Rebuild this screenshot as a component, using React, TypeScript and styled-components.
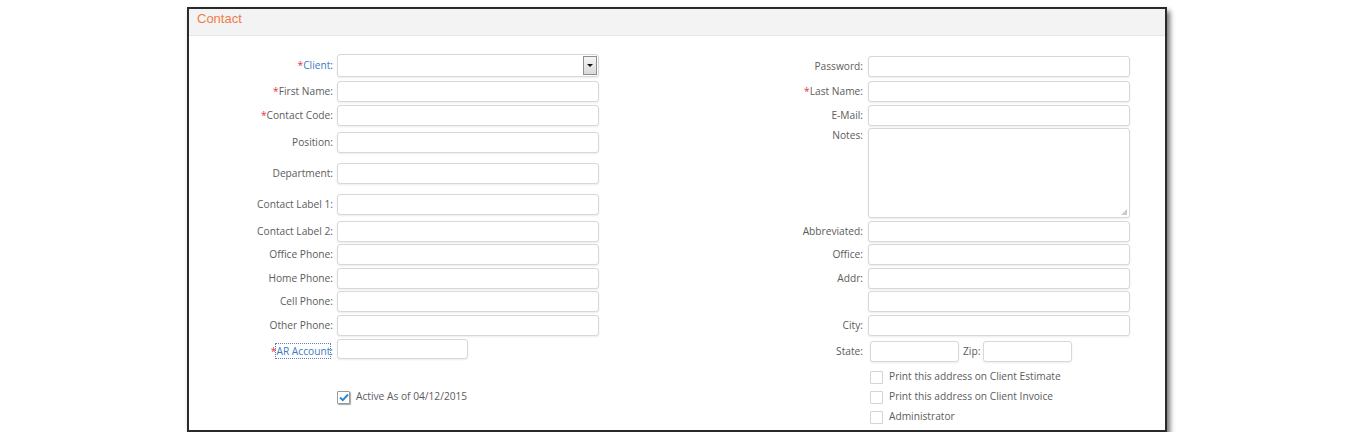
import React from 'react';
import styled, { createGlobalStyle } from 'styled-components';

const GlobalStyle = createGlobalStyle`
  body {
    margin: 0;
    background: #fff;
    font-family: 'Open Sans', 'Liberation Sans', Arial, sans-serif;
  }
`;

const Page = styled.div`
  padding: 7px 0 0 187px;
`;

const Panel = styled.section`
  box-sizing: border-box;
  width: 980px;
  height: 425px;
  border: 2px solid #2a2a2a;
  background: #fff;
  box-shadow: 3px 4px 5px rgba(0, 0, 0, 0.55);
`;

const PanelHeader = styled.header`
  box-sizing: border-box;
  height: 27px;
  padding: 1px 0 0 8px;
  background: #f3f3f3;
  border-bottom: 1px solid #e7e7e7;
  color: #f27b4b;
  font: 13px/17px 'Liberation Sans', Arial, sans-serif;
`;

const Body = styled.div`
  display: flex;
`;

const Column = styled.div<{ $top: number }>`
  display: flex;
  flex-direction: column;
  padding-top: ${p => p.$top}px;
`;

const Row = styled.div<{ $mt: number; $start?: boolean }>`
  display: flex;
  align-items: ${p => (p.$start ? 'flex-start' : 'center')};
  margin-top: ${p => p.$mt}px;
`;

const Label = styled.label<{ $w: number; $gap: number; $padTop?: number }>`
  box-sizing: border-box;
  width: ${p => p.$w}px;
  margin-right: ${p => p.$gap}px;
  padding-top: ${p => p.$padTop || 0}px;
  padding-bottom: ${p => (p.$padTop ? 0 : 1)}px;
  text-align: right;
  font-size: 10.2px;
  line-height: 13px;
  color: #5c5c5c;
  white-space: nowrap;
`;

const Req = styled.span`
  color: #e8343a;
`;

const LinkText = styled.span<{ $dotted?: boolean }>`
  color: #3c7bc2;
  ${p => (p.$dotted ? 'outline: 1px dotted #5b7fb0; outline-offset: 0;' : '')}
`;

const Input = styled.input<{ $w?: number; $h?: number }>`
  box-sizing: border-box;
  width: ${p => p.$w || 262}px;
  height: ${p => p.$h || 21}px;
  margin: 0;
  padding: 0 4px;
  border: 1px solid #d8d8d8;
  border-radius: 3px;
  background: #fff;
  box-shadow: 0 1px 2px rgba(0, 0, 0, 0.08);
  font: 11px 'Open Sans', sans-serif;
  outline: none;
`;

const NotesBox = styled.div`
  box-sizing: border-box;
  position: relative;
  width: 262px;
  height: 90px;
  border: 1px solid #d8d8d8;
  border-radius: 3px;
  box-shadow: 0 1px 2px rgba(0, 0, 0, 0.08);
`;

const TextArea = styled.textarea`
  box-sizing: border-box;
  display: block;
  width: 100%;
  height: 100%;
  margin: 0;
  border: 0;
  background: transparent;
  resize: none;
  outline: none;
`;

const Grip = styled.span`
  position: absolute;
  right: 2px;
  bottom: 2px;
  width: 6px;
  height: 6px;
  background:
    radial-gradient(circle, #c8c8c8 0.7px, transparent 0.9px) 0 0 / 2px 2px;
  clip-path: polygon(100% 0, 100% 100%, 0 100%);
`;

const Select = styled.div`
  box-sizing: border-box;
  position: relative;
  width: 262px;
  height: 23px;
  border: 1px solid #d8d8d8;
  border-radius: 3px;
  background: #fff;
  box-shadow: 0 1px 2px rgba(0, 0, 0, 0.08);
`;

const SelectButton = styled.span`
  box-sizing: border-box;
  position: absolute;
  top: 1px;
  right: 1px;
  width: 14px;
  height: 19px;
  border: 1px solid #8f8f8f;
  background: linear-gradient(#f6f6f6, #d9d9d9);
  display: flex;
  align-items: center;
  justify-content: center;

  &::after {
    content: '';
    border-left: 3px solid transparent;
    border-right: 3px solid transparent;
    border-top: 3px solid #111;
  }
`;

const InlineLabel = styled.span`
  margin: 0 3px 2px 4px;
  font-size: 10.2px;
  color: #5c5c5c;
`;

const CheckRow = styled.div<{ $mt: number; $indent: number }>`
  display: flex;
  align-items: center;
  margin-top: ${p => p.$mt}px;
  padding-left: ${p => p.$indent}px;
  font-size: 10.2px;
  line-height: 13px;
  color: #5c5c5c;
`;

const Box = styled.span<{ $checked?: boolean }>`
  box-sizing: border-box;
  flex: none;
  width: 13px;
  height: 13px;
  margin-right: 6px;
  border: 1px solid ${p => (p.$checked ? '#9a9a9a' : '#d4d4d4')};
  border-radius: 1px;
  background: #fff;
  box-shadow: ${p => (p.$checked ? '1px 1px 1px rgba(0,0,0,0.35)' : 'none')};
  display: flex;
  align-items: center;
  justify-content: center;
`;

const CheckText = styled.span`
  padding-bottom: 1px;
`;

type Def = { label: React.ReactNode; mt: number };

const leftFields: Def[] = [
  { label: <><Req>*</Req>First Name:</>, mt: 4 },
  { label: <><Req>*</Req>Contact Code:</>, mt: 3 },
  { label: 'Position:', mt: 6 },
  { label: 'Department:', mt: 10 },
  { label: 'Contact Label 1:', mt: 10 },
  { label: 'Contact Label 2:', mt: 6 },
  { label: 'Office Phone:', mt: 2 },
  { label: 'Home Phone:', mt: 3 },
  { label: 'Cell Phone:', mt: 2 },
  { label: 'Other Phone:', mt: 3 },
];

const rightTop: Def[] = [
  { label: 'Password:', mt: 0 },
  { label: <><Req>*</Req>Last Name:</>, mt: 4 },
  { label: 'E-Mail:', mt: 3 },
];

const rightBottom: Def[] = [
  { label: 'Abbreviated:', mt: 3 },
  { label: 'Office:', mt: 2 },
  { label: 'Addr:', mt: 3 },
  { label: '', mt: 2 },
  { label: 'City:', mt: 3 },
];

const printOptions = [
  { text: 'Print this address on Client Estimate', mt: 8 },
  { text: 'Print this address on Client Invoice', mt: 6 },
  { text: 'Administrator', mt: 6 },
];

const Check = () => (
  <svg width="10" height="9" viewBox="0 0 10 9">
    <path d="M1 4.6 L3.8 7.2 L9 1.5" fill="none" stroke="#2a8ad6" strokeWidth="2" />
  </svg>
);

const L = { w: 144, gap: 4 };
const R = { w: 264, gap: 5 };

export default function App() {
  return (
    <>
      <GlobalStyle />
      <Page>
        <Panel>
          <PanelHeader>Contact</PanelHeader>
          <Body>
            <Column $top={18}>
              <Row $mt={0}>
                <Label $w={L.w} $gap={L.gap}>
                  <Req>*</Req>
                  <LinkText>Client</LinkText>:
                </Label>
                <Select>
                  <SelectButton />
                </Select>
              </Row>
              {leftFields.map((f, i) => (
                <Row key={i} $mt={f.mt}>
                  <Label $w={L.w} $gap={L.gap}>{f.label}</Label>
                  <Input />
                </Row>
              ))}
              <Row $mt={3}>
                <Label $w={L.w} $gap={L.gap} $padTop={5}>
                  <Req>*</Req>
                  <LinkText $dotted>AR Account</LinkText>:
                </Label>
                <Input $w={131} $h={20} />
              </Row>
              <CheckRow $mt={31} $indent={L.w + L.gap}>
                <Box $checked>
                  <Check />
                </Box>
                <CheckText>Active As of 04/12/2015</CheckText>
              </CheckRow>
            </Column>
            <Column $top={20}>
              {rightTop.map((f, i) => (
                <Row key={i} $mt={f.mt}>
                  <Label $w={R.w} $gap={R.gap}>{f.label}</Label>
                  <Input />
                </Row>
              ))}
              <Row $mt={2} $start>
                <Label $w={R.w} $gap={R.gap} $padTop={1}>Notes:</Label>
                <NotesBox>
                  <TextArea />
                  <Grip />
                </NotesBox>
              </Row>
              {rightBottom.map((f, i) => (
                <Row key={i} $mt={f.mt}>
                  <Label $w={R.w} $gap={R.gap}>{f.label}</Label>
                  <Input />
                </Row>
              ))}
              <Row $mt={5}>
                <Label $w={R.w} $gap={R.gap + 2}>State:</Label>
                <Input $w={89} />
                <InlineLabel>Zip:</InlineLabel>
                <Input $w={89} />
              </Row>
              {printOptions.map(o => (
                <CheckRow key={o.text} $mt={o.mt} $indent={R.w + R.gap + 2}>
                  <Box />
                  <CheckText>{o.text}</CheckText>
                </CheckRow>
              ))}
            </Column>
          </Body>
        </Panel>
      </Page>
    </>
  );
}
